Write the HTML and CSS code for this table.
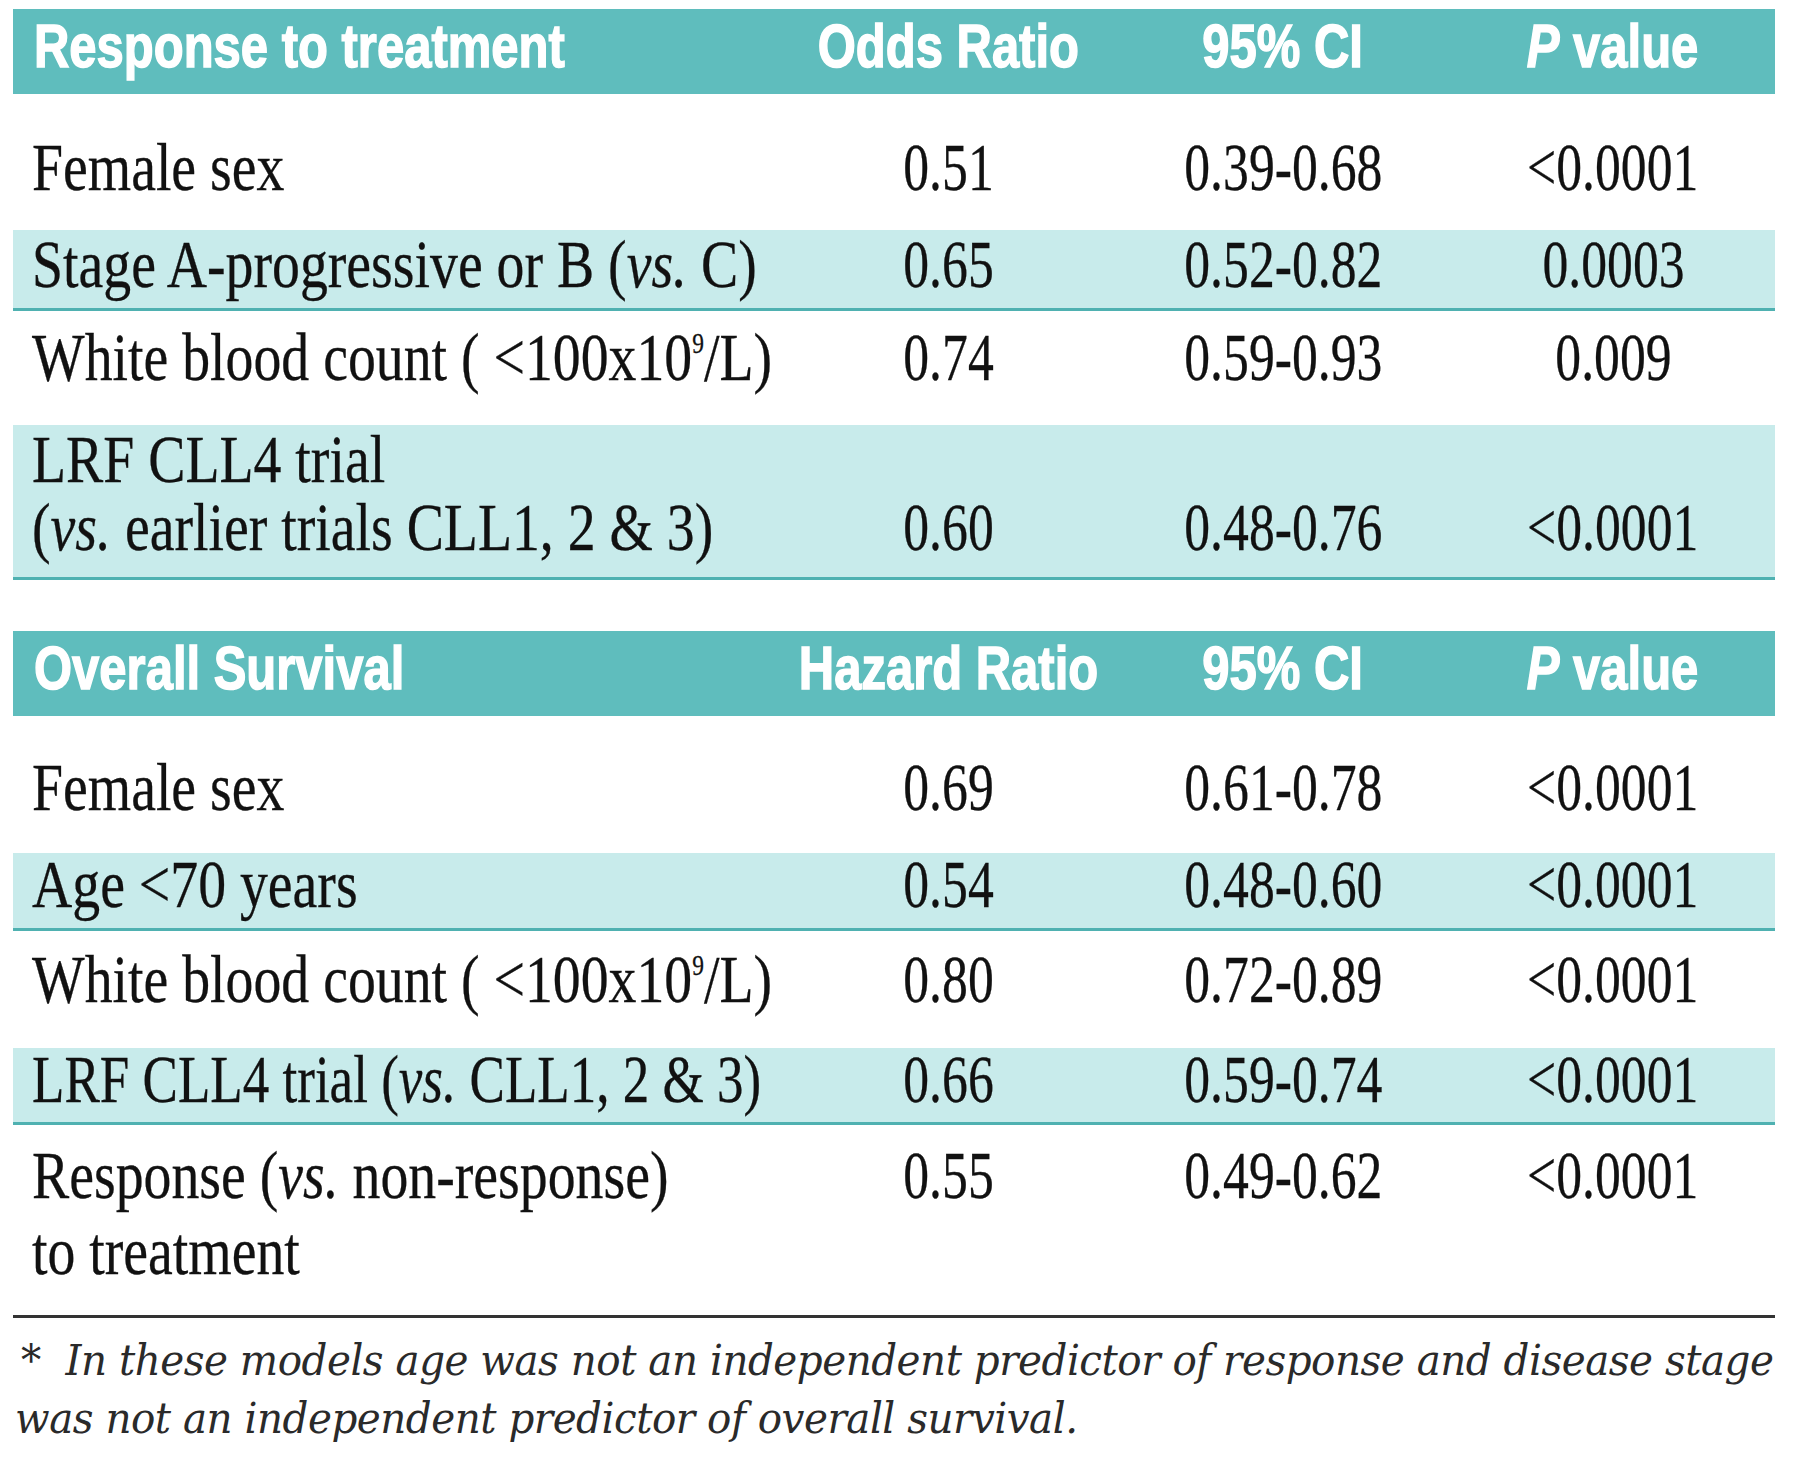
FILE: index.html
```html
<!DOCTYPE html>
<html lang="en">
<head>
<meta charset="utf-8">
<title>Multivariate analysis</title>
<link rel="stylesheet" href="styles.css">
</head>
<body>
<div class="page">
  <section class="block">
    <div class="row head">
      <div class="hc first"><span class="h">Response to treatment</span></div>
      <div class="hc"><span class="h">Odds Ratio</span></div>
      <div class="hc"><span class="h">95% CI</span></div>
      <div class="hc"><span class="h"><i>P</i> value</span></div>
    </div>
    <div class="row s1r1">
      <div class="c first"><span class="t">Female sex</span></div>
      <div class="c"><span class="n">0.51</span></div>
      <div class="c"><span class="n">0.39-0.68</span></div>
      <div class="c"><span class="n">&lt;0.0001</span></div>
    </div>
    <div class="row band s1r2">
      <div class="c first"><span class="t">Stage A-progressive or B (<i>vs.</i> C)</span></div>
      <div class="c"><span class="n">0.65</span></div>
      <div class="c"><span class="n">0.52-0.82</span></div>
      <div class="c"><span class="n">0.0003</span></div>
    </div>
    <div class="row s1r3">
      <div class="c first"><span class="t">White blood count ( &lt;100x10<sup class="sup">9</sup>/L)</span></div>
      <div class="c"><span class="n">0.74</span></div>
      <div class="c"><span class="n">0.59-0.93</span></div>
      <div class="c"><span class="n">0.009</span></div>
    </div>
    <div class="row band s1r4">
      <div class="c first"><span class="t">LRF CLL4 trial<br>(<i>vs.</i> earlier trials CLL1, 2 &amp; 3)</span></div>
      <div class="c bottom"><span class="n">0.60</span></div>
      <div class="c bottom"><span class="n">0.48-0.76</span></div>
      <div class="c bottom"><span class="n">&lt;0.0001</span></div>
    </div>
  </section>

  <section class="block second">
    <div class="row head">
      <div class="hc first"><span class="h">Overall Survival</span></div>
      <div class="hc"><span class="h">Hazard Ratio</span></div>
      <div class="hc"><span class="h">95% CI</span></div>
      <div class="hc"><span class="h"><i>P</i> value</span></div>
    </div>
    <div class="row s2r1">
      <div class="c first"><span class="t">Female sex</span></div>
      <div class="c"><span class="n">0.69</span></div>
      <div class="c"><span class="n">0.61-0.78</span></div>
      <div class="c"><span class="n">&lt;0.0001</span></div>
    </div>
    <div class="row band s2r2">
      <div class="c first"><span class="t">Age &lt;70 years</span></div>
      <div class="c"><span class="n">0.54</span></div>
      <div class="c"><span class="n">0.48-0.60</span></div>
      <div class="c"><span class="n">&lt;0.0001</span></div>
    </div>
    <div class="row s2r3">
      <div class="c first"><span class="t">White blood count ( &lt;100x10<sup class="sup">9</sup>/L)</span></div>
      <div class="c"><span class="n">0.80</span></div>
      <div class="c"><span class="n">0.72-0.89</span></div>
      <div class="c"><span class="n">&lt;0.0001</span></div>
    </div>
    <div class="row band s2r4">
      <div class="c first"><span class="t narrow">LRF CLL4 trial (<i>vs.</i> CLL1, 2 &amp; 3)</span></div>
      <div class="c"><span class="n">0.66</span></div>
      <div class="c"><span class="n">0.59-0.74</span></div>
      <div class="c"><span class="n">&lt;0.0001</span></div>
    </div>
    <div class="row s2r5">
      <div class="c first"><span class="t">Response (<i>vs.</i> non-response)<br>to treatment</span></div>
      <div class="c"><span class="n">0.55</span></div>
      <div class="c"><span class="n">0.49-0.62</span></div>
      <div class="c"><span class="n">&lt;0.0001</span></div>
    </div>
  </section>

  <div class="note">
    <div class="note-line first-line"><span class="nt">*&nbsp; In these models age was not an independent predictor of response and disease stage</span></div>
    <div class="note-line"><span class="nt">was not an independent predictor of overall survival.</span></div>
  </div>
</div>
</body>
</html>
```

FILE: styles.css
```css
html, body {
  margin: 0;
  padding: 0;
  background: #ffffff;
}

.page {
  width: 1762px;
  padding: 9px 0 0 13px;
  color: #111111;
  font-family: "Liberation Serif", "Times New Roman", serif;
}

.block.second {
  margin-top: 51px;
}

.row {
  display: grid;
  grid-template-columns: 785px 300px 370px 290px;
  padding-right: 17px;
  font-size: 68px;
  line-height: 70px;
}

.c {
  display: flex;
  justify-content: center;
  white-space: nowrap;
}

.c.first {
  justify-content: flex-start;
  padding-left: 19px;
}

.c.bottom {
  align-self: end;
}

.t {
  display: block;
  transform: scaleX(0.82);
  transform-origin: 0 50%;
  -webkit-text-stroke: 0.3px #111111;
}

.t.narrow {
  transform: scaleX(0.78);
}

.n {
  display: block;
  transform: scaleX(0.76);
  transform-origin: 50% 50%;
  -webkit-text-stroke: 0.3px #111111;
}

.sup {
  font-size: 0.42em;
  line-height: 0;
  vertical-align: 0.95em;
}

/* header bar */
.head {
  background: #5fbdbd;
  color: #ffffff;
  font-family: "Liberation Sans", Arial, sans-serif;
  font-weight: bold;
  font-size: 62px;
  line-height: 73px;
  padding-bottom: 12px;
}

.hc {
  display: flex;
  justify-content: center;
  white-space: nowrap;
}

.hc.first {
  justify-content: flex-start;
  padding-left: 21px;
}

.h {
  display: block;
  transform: scaleX(0.79);
  transform-origin: 50% 50%;
  -webkit-text-stroke: 1.5px #ffffff;
}

.hc.first .h {
  transform-origin: 0 50%;
}

/* light bands */
.band {
  background: #c8ebeb;
  border-bottom: 3px solid #4fb1b1;
}

/* section 1 rows */
.s1r1 { padding-top: 38px; padding-bottom: 28px; }
.s1r2 { line-height: 62px; padding-top: 3px; padding-bottom: 13px; }
.s1r3 { padding-top: 11px; padding-bottom: 33px; }
.s1r4 { line-height: 68px; padding-top: 0; padding-bottom: 16px; }

/* section 2 rows */
.s2r1 { padding-top: 36px; padding-bottom: 31px; }
.s2r2 { line-height: 62px; padding-top: 0; padding-bottom: 13px; }
.s2r3 { padding-top: 13px; padding-bottom: 34px; }
.s2r4 { line-height: 62px; padding-top: 0; padding-bottom: 12px; }
.s2r5 {
  line-height: 76px;
  padding-top: 12px;
  padding-bottom: 26px;
  border-bottom: 3px solid #333333;
}

/* footnote */
.note {
  margin-top: 13px;
  font-family: "DejaVu Serif", "Liberation Serif", serif;
  font-style: italic;
  font-size: 43px;
  line-height: 58px;
  color: #2a2a2a;
}

.note-line {
  white-space: nowrap;
  padding-left: 2px;
}

.note-line.first-line {
  padding-left: 8px;
}

.nt {
  display: inline-block;
  transform: scaleX(0.94);
  transform-origin: 0 50%;
  letter-spacing: -0.5px;
}
```
